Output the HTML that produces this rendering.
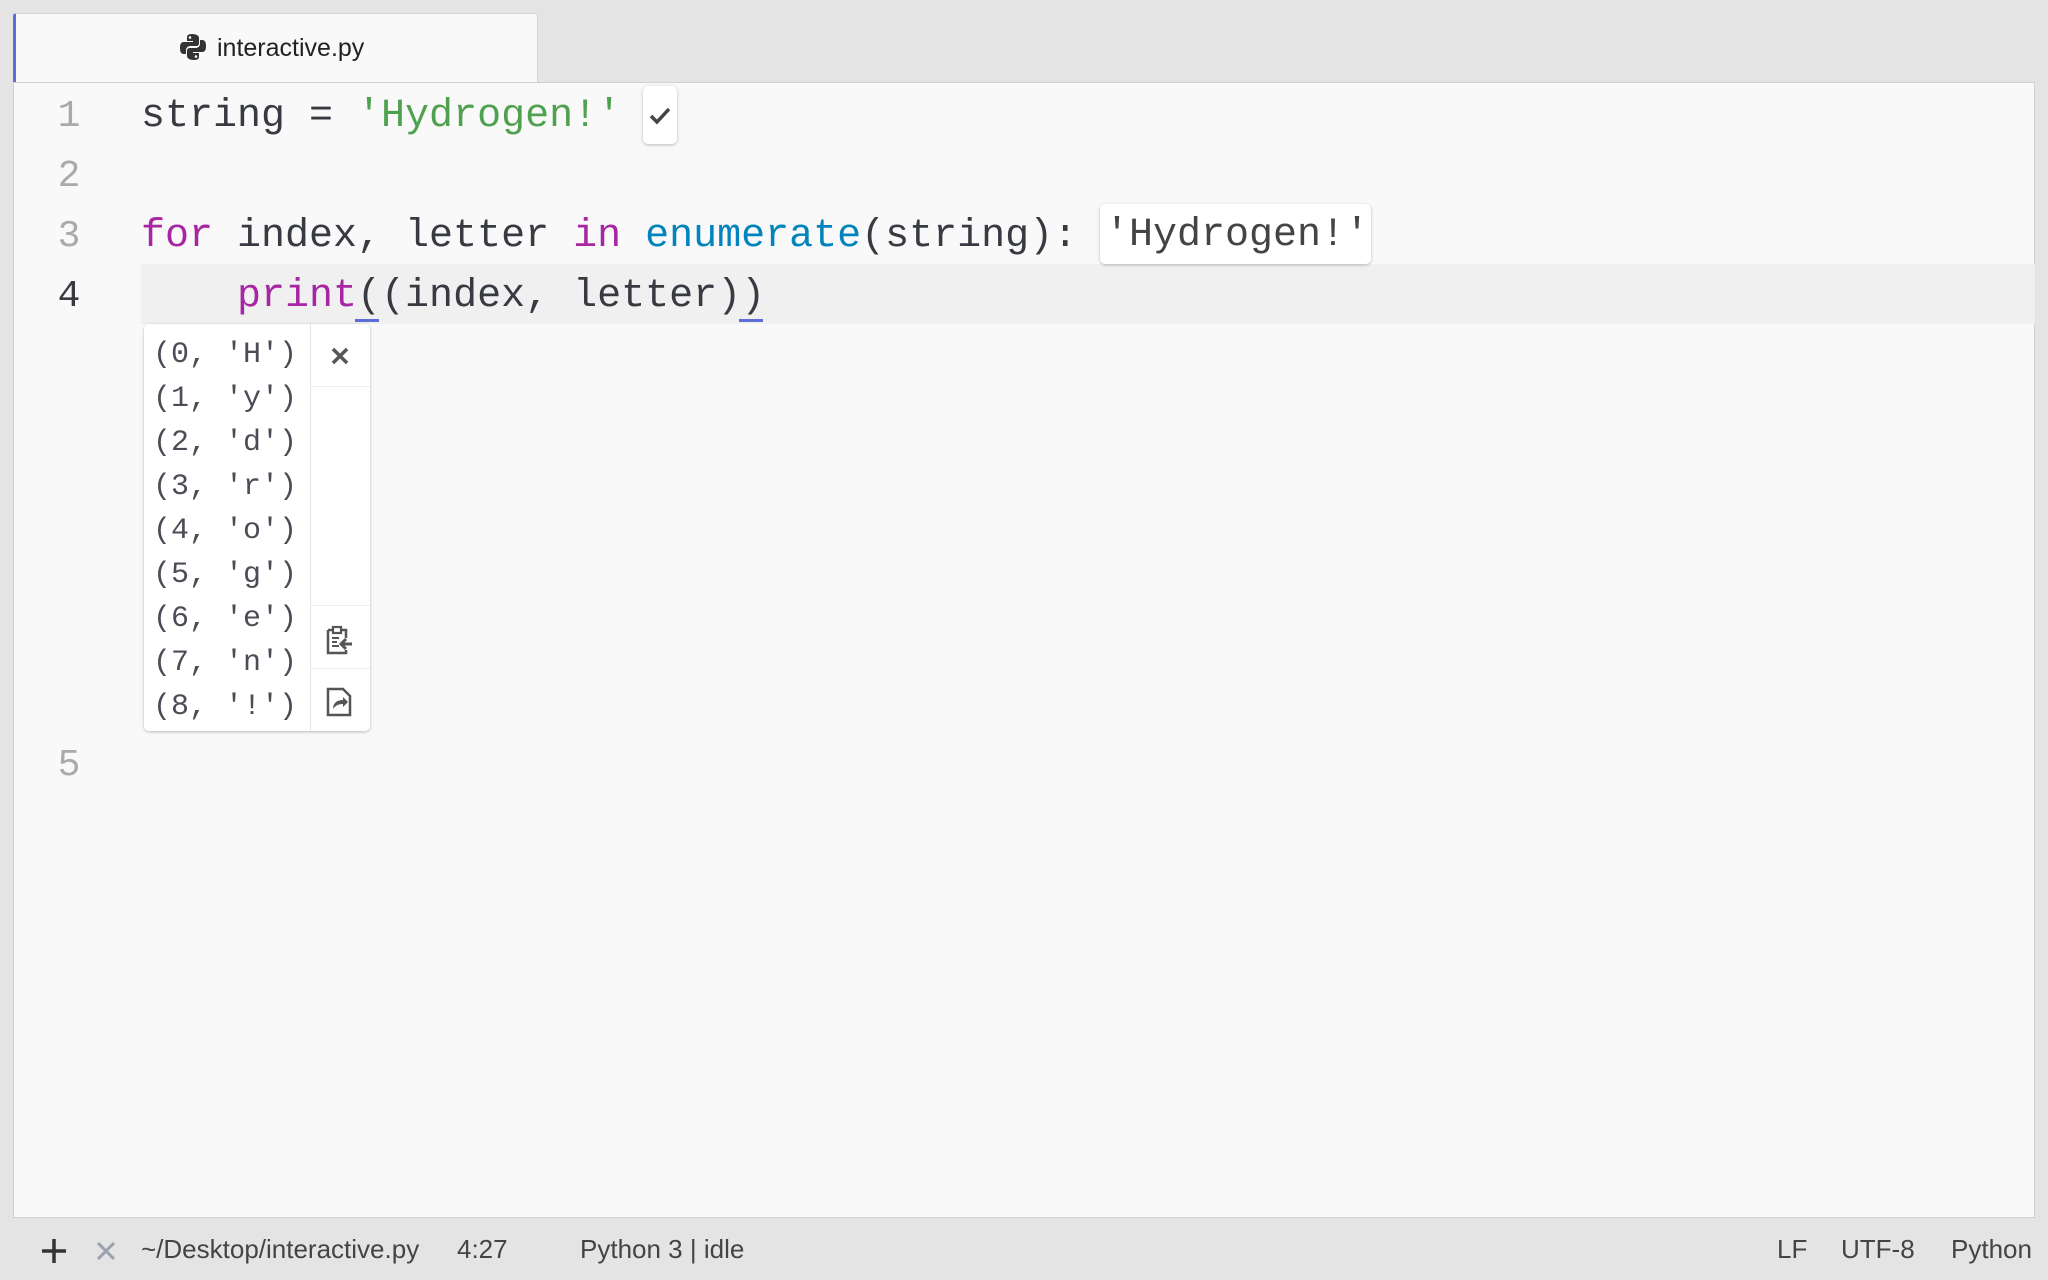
<!DOCTYPE html>
<html><head><meta charset="utf-8"><style>
*{margin:0;padding:0;box-sizing:border-box}
body{width:2048px;height:1280px;background:#e4e4e4;position:relative;overflow:hidden;font-family:"Liberation Sans",sans-serif;color:#333}
.abs{position:absolute}
.tab{left:13px;top:13px;width:525px;height:70px;background:#f9f9f9;border:1px solid #d4d4d4;border-bottom:none;border-left:3px solid #5a6fd6;border-radius:3px 3px 0 0}
.editor{left:13px;top:82px;width:2022px;height:1136px;background:#f9f9f9;border:1px solid #d0d0d0}
.ln{left:40px;width:58px;text-align:center;font-family:"Liberation Mono",monospace;font-size:38px;color:#aaaaac;line-height:60px}
.code{left:141px;font-family:"Liberation Mono",monospace;font-size:40px;color:#383a42;line-height:60px;white-space:pre}
.g{color:#50a14f}.p{color:#a626a4}.b{color:#0184bc}
.box{background:#fff;border-radius:5px;box-shadow:0 1px 3px rgba(0,0,0,.25)}
.out{font-family:"Liberation Mono",monospace;font-size:30px;color:#4a4d55;line-height:44px;white-space:pre}
.st{top:1234px;font-size:26px;color:#444;line-height:30px}
</style></head><body>
<div class="abs tab"></div>
<svg class="abs" style="left:180px;top:33px" width="26" height="28" viewBox="0 0 26 28"><path d="M12 1c-5 0-5 2-5 4v3h6v1H4c-3 0-4 2-4 6s1 6 4 6h2v-4c0-2 2-4 4-4h6c2 0 3-1 3-3V5c0-2-2-4-7-4z" fill="#333"/><path d="M14 27c5 0 5-2 5-4v-3h-6v-1h9c3 0 4-2 4-6s-1-6-4-6h-2v4c0 2-2 4-4 4h-6c-2 0-3 1-3 3v5c0 2 2 4 7 4z" fill="#333"/><circle cx="10" cy="4.5" r="1.3" fill="#fff"/><circle cx="16" cy="23.5" r="1.3" fill="#fff"/></svg>
<div class="abs" style="left:217px;top:33px;font-size:25px;color:#222;line-height:30px">interactive.py</div>
<div class="abs editor"></div>
<div class="abs" style="left:141px;top:264px;width:1894px;height:60px;background:#f0f0f0"></div>
<div class="abs ln" style="top:87px">1</div>
<div class="abs ln" style="top:147px">2</div>
<div class="abs ln" style="top:207px">3</div>
<div class="abs ln" style="top:267px;color:#383a42">4</div>
<div class="abs ln" style="top:736px">5</div>
<div class="abs code" style="top:87px">string = <span class="g">'Hydrogen!'</span></div>
<div class="abs code" style="top:207px"><span class="p">for</span> index, letter <span class="p">in</span> <span class="b">enumerate</span>(string):</div>
<div class="abs code" style="top:267px">    <span class="p">print</span>((index, letter))</div>
<div class="abs" style="left:355px;top:319px;width:24px;height:3px;background:#5a6fd6"></div>
<div class="abs" style="left:739px;top:319px;width:24px;height:3px;background:#5a6fd6"></div>
<div class="abs box" style="left:643px;top:86px;width:34px;height:58px"></div>
<svg class="abs" style="left:648px;top:106px" width="24" height="20" viewBox="0 0 24 20"><path d="M3 10l6 6L21 3" stroke="#444" stroke-width="3.5" fill="none"/></svg>
<div class="abs box code" style="left:1100px;top:204px;width:271px;height:60px;padding-left:5px;color:#444;line-height:64px">'Hydrogen!'</div>
<div class="abs box" style="left:144px;top:324px;width:226px;height:407px"></div>
<div class="abs" style="left:310px;top:324px;width:1px;height:407px;background:#e4e4e4"></div>
<div class="abs" style="left:311px;top:386px;width:59px;height:1px;background:#ececec"></div>
<div class="abs" style="left:311px;top:605px;width:59px;height:1px;background:#ececec"></div>
<div class="abs" style="left:311px;top:668px;width:59px;height:1px;background:#ececec"></div>
<div class="abs out" style="left:153px;top:333px">(0, 'H')
(1, 'y')
(2, 'd')
(3, 'r')
(4, 'o')
(5, 'g')
(6, 'e')
(7, 'n')
(8, '!')</div>
<svg class="abs" style="left:330px;top:346px" width="20" height="20" viewBox="0 0 20 20"><path d="M3 3l14 14M17 3L3 17" stroke="#555" stroke-width="3.5"/></svg>
<svg class="abs" style="left:324px;top:624px" width="30" height="32" viewBox="0 0 30 32"><path d="M4 6h5M17 6h5v8M22 26v3H4V6" stroke="#555" stroke-width="2.5" fill="none"/><rect x="9" y="3" width="8" height="6" fill="none" stroke="#555" stroke-width="2.2"/><path d="M8 14h7M8 18h5M8 22h7" stroke="#555" stroke-width="2"/><path d="M28 20H18M22 15l-5 5 5 5" stroke="#555" stroke-width="3" fill="none"/></svg>
<svg class="abs" style="left:326px;top:687px" width="26" height="30" viewBox="0 0 26 30"><path d="M2 2h15l7 7v19H2z" fill="none" stroke="#555" stroke-width="2.5"/><path d="M7 22c0-6 4-9 10-9v-3l5 5-5 5v-3c-5 0-8 2-10 5z" fill="#555"/></svg>
<svg class="abs" style="left:41px;top:1238px" width="26" height="26" viewBox="0 0 26 26"><path d="M13 1v24M1 13h24" stroke="#333" stroke-width="3.5"/></svg>
<svg class="abs" style="left:96px;top:1241px" width="20" height="20" viewBox="0 0 20 20"><path d="M2 2l16 16M18 2L2 18" stroke="#9aa0ad" stroke-width="3"/></svg>
<div class="abs st" style="left:141px">~/Desktop/interactive.py</div>
<div class="abs st" style="left:457px">4:27</div>
<div class="abs st" style="left:580px">Python 3 | idle</div>
<div class="abs st" style="left:1777px">LF</div>
<div class="abs st" style="left:1841px">UTF-8</div>
<div class="abs st" style="left:1951px">Python</div>
</body></html>
